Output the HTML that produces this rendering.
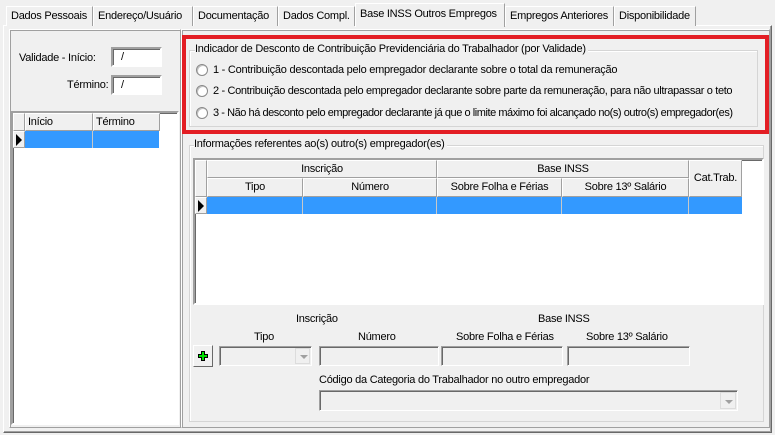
<!DOCTYPE html>
<html><head><meta charset="utf-8"><style>
*{box-sizing:border-box;margin:0;padding:0}
body{width:775px;height:435px;background:#f0f0f0;font-family:"Liberation Sans",sans-serif;font-size:11px;letter-spacing:-0.25px;color:#000;position:relative;overflow:hidden}
.a{position:absolute}
.t{position:absolute;white-space:nowrap;line-height:13px}
.tab{position:absolute;top:6px;height:20px;border:1px solid #fff;border-right-color:#a0a0a0;border-bottom:none;padding:3px 0 0 4px;white-space:nowrap;background:#f0f0f0}
.in{position:absolute;background:#fff;border:2px solid;border-color:#a0a0a0 #fff #fff #a0a0a0;box-shadow:inset 1px 1px 0 #696969}
.dis{position:absolute;background:#f0f0f0;border:1px solid;border-color:#a0a0a0 #fff #fff #a0a0a0;box-shadow:inset 1px 1px 0 #696969}
.grp{position:absolute;border:1px solid #d5d5d5;box-shadow:1px 1px 0 #fff inset}
.hd{position:absolute;background:#f0f0f0;border:1px solid;border-color:#fff #a0a0a0 #a0a0a0 #fff;text-align:center;line-height:16px;white-space:nowrap}
.radio{position:absolute;width:12px;height:12px;border-radius:50%;background:#fff;border:1px solid #8a8a8a;box-shadow:inset 1px 1px 0 #c0c0c0}
.cell{position:absolute;background:#3399ff;border-right:1px solid #c8c8c8}
</style></head><body>
<div class="a" style="left:3px;top:25px;width:769px;height:408px;border:1px solid;border-color:#fff #696969 #696969 #fff;box-shadow:inset -1px -1px 0 #a0a0a0"></div>
<div class="tab" style="left:6px;width:87px">Dados Pessoais</div>
<div class="tab" style="left:93px;width:100px">Endereço/Usuário</div>
<div class="tab" style="left:193px;width:85px">Documentação</div>
<div class="tab" style="left:278px;width:77px">Dados Compl.</div>
<div class="tab" style="left:355px;top:3px;height:24px;width:150px;padding-top:4px;z-index:2">Base INSS Outros Empregos</div>
<div class="tab" style="left:505px;width:109px">Empregos Anteriores</div>
<div class="tab" style="left:614px;width:82px">Disponibilidade</div>

<div class="a" style="left:9px;top:29px;width:172px;height:399px;border:1px solid;border-color:#fff #a0a0a0 #a0a0a0 #fff;box-shadow:inset 1px 1px 0 #a0a0a0"></div>
<div class="t" style="left:19px;top:52px">Validade - Início:</div>
<div class="in" style="left:111px;top:47px;width:51px;height:20px;padding:2px 0 0 8px">/</div>
<div class="t" style="left:67px;top:79px">Término:</div>
<div class="in" style="left:111px;top:75px;width:51px;height:20px;padding:2px 0 0 8px">/</div>
<div class="in" style="left:11px;top:111px;width:168px;height:314px"></div>
<div class="hd" style="left:13px;top:113px;width:12px;height:18px"></div>
<div class="hd" style="left:25px;top:113px;width:68px;height:18px;text-align:left;padding-left:2px">Início</div>
<div class="hd" style="left:93px;top:113px;width:67px;height:18px;text-align:left;padding-left:2px">Término</div>
<div class="hd" style="left:13px;top:131px;width:12px;height:17px"></div>
<div class="a" style="left:16px;top:134px;width:0;height:0;border-left:6px solid #000;border-top:6px solid transparent;border-bottom:6px solid transparent"></div>
<div class="cell" style="left:25px;top:131px;width:68px;height:17px"></div>
<div class="cell" style="left:93px;top:131px;width:66px;height:17px;border-right:none"></div>

<div class="a" style="left:181px;top:29px;width:589px;height:399px;border:1px solid;border-color:#fff #a0a0a0 #a0a0a0 #fff;box-shadow:inset 1px 1px 0 #a0a0a0"></div>
<div class="a" style="left:182px;top:35px;width:587px;height:99px;border:4px solid #e31e24"></div>
<div class="grp" style="left:189px;top:50px;width:569px;height:77px"></div>
<div class="t" style="left:195px;top:43px;background:#f0f0f0;padding-right:2px">Indicador de Desconto de Contribuição Previdenciária do Trabalhador (por Validade)</div>
<div class="radio" style="left:196px;top:64px"></div>
<div class="t" style="left:213px;top:64px">1 - Contribuição descontada pelo empregador declarante sobre o total da remuneração</div>
<div class="radio" style="left:196px;top:85px"></div>
<div class="t" style="left:213px;top:85px;letter-spacing:-0.35px">2 - Contribuição descontada pelo empregador declarante sobre parte da remuneração, para não ultrapassar o teto</div>
<div class="radio" style="left:196px;top:107px"></div>
<div class="t" style="left:213px;top:107px;letter-spacing:-0.45px">3 - Não há desconto pelo empregador declarante já que o limite máximo foi alcançado no(s) outro(s) empregador(es)</div>

<div class="grp" style="left:189px;top:145px;width:575px;height:277px"></div>
<div class="t" style="left:194px;top:138px;background:#f0f0f0;padding-right:2px">Informações referentes ao(s) outro(s) empregador(es)</div>
<div class="in" style="left:193px;top:158px;width:571px;height:147px"></div>
<div class="hd" style="left:195px;top:160px;width:12px;height:37px"></div>
<div class="hd" style="left:207px;top:160px;width:230px;height:18px">Inscrição</div>
<div class="hd" style="left:437px;top:160px;width:252px;height:18px">Base INSS</div>
<div class="hd" style="left:689px;top:160px;width:53px;height:37px;line-height:35px">Cat.Trab.</div>
<div class="hd" style="left:207px;top:178px;width:96px;height:19px">Tipo</div>
<div class="hd" style="left:303px;top:178px;width:134px;height:19px">Número</div>
<div class="hd" style="left:437px;top:178px;width:125px;height:19px">Sobre Folha e Férias</div>
<div class="hd" style="left:562px;top:178px;width:127px;height:19px">Sobre 13º Salário</div>
<div class="hd" style="left:195px;top:197px;width:12px;height:17px"></div>
<div class="a" style="left:198px;top:200px;width:0;height:0;border-left:6px solid #000;border-top:6px solid transparent;border-bottom:6px solid transparent"></div>
<div class="cell" style="left:207px;top:197px;width:96px;height:17px"></div>
<div class="cell" style="left:303px;top:197px;width:134px;height:17px"></div>
<div class="cell" style="left:437px;top:197px;width:125px;height:17px"></div>
<div class="cell" style="left:562px;top:197px;width:127px;height:17px"></div>
<div class="cell" style="left:689px;top:197px;width:53px;height:17px;border-right:none"></div>

<div class="t" style="left:296px;top:313px">Inscrição</div>
<div class="t" style="left:538px;top:313px">Base INSS</div>
<div class="t" style="left:254px;top:331px">Tipo</div>
<div class="t" style="left:358px;top:331px">Número</div>
<div class="t" style="left:456px;top:331px">Sobre Folha e Férias</div>
<div class="t" style="left:586px;top:331px">Sobre 13º Salário</div>
<div class="a" style="left:193px;top:345px;width:20px;height:22px;border:1px solid;border-color:#fff #696969 #696969 #fff;background:#f0f0f0"><svg width="18" height="20"><path d="M9 5v10M4 10h10" stroke="#000" stroke-width="4"/><path d="M9 6v8M5 10h8" stroke="#00e000" stroke-width="2"/></svg></div>
<div class="dis" style="left:219px;top:346px;width:93px;height:20px"></div>
<div class="a" style="left:295px;top:348px;width:15px;height:16px;border:1px solid #dcdcdc;background:#f0f0f0"><div class="a" style="left:4px;top:6px;border-top:4px solid #a0a0a0;border-left:4px solid transparent;border-right:4px solid transparent"></div></div>
<div class="dis" style="left:319px;top:346px;width:120px;height:20px"></div>
<div class="dis" style="left:441px;top:346px;width:122px;height:20px"></div>
<div class="dis" style="left:567px;top:346px;width:123px;height:20px"></div>
<div class="t" style="left:319px;top:374px">Código da Categoria do Trabalhador no outro empregador</div>
<div class="dis" style="left:319px;top:390px;width:419px;height:21px"></div>
<div class="a" style="left:720px;top:392px;width:16px;height:17px;border:1px solid #dcdcdc;background:#f0f0f0"><div class="a" style="left:4px;top:7px;border-top:4px solid #a0a0a0;border-left:4px solid transparent;border-right:4px solid transparent"></div></div>
</body></html>
